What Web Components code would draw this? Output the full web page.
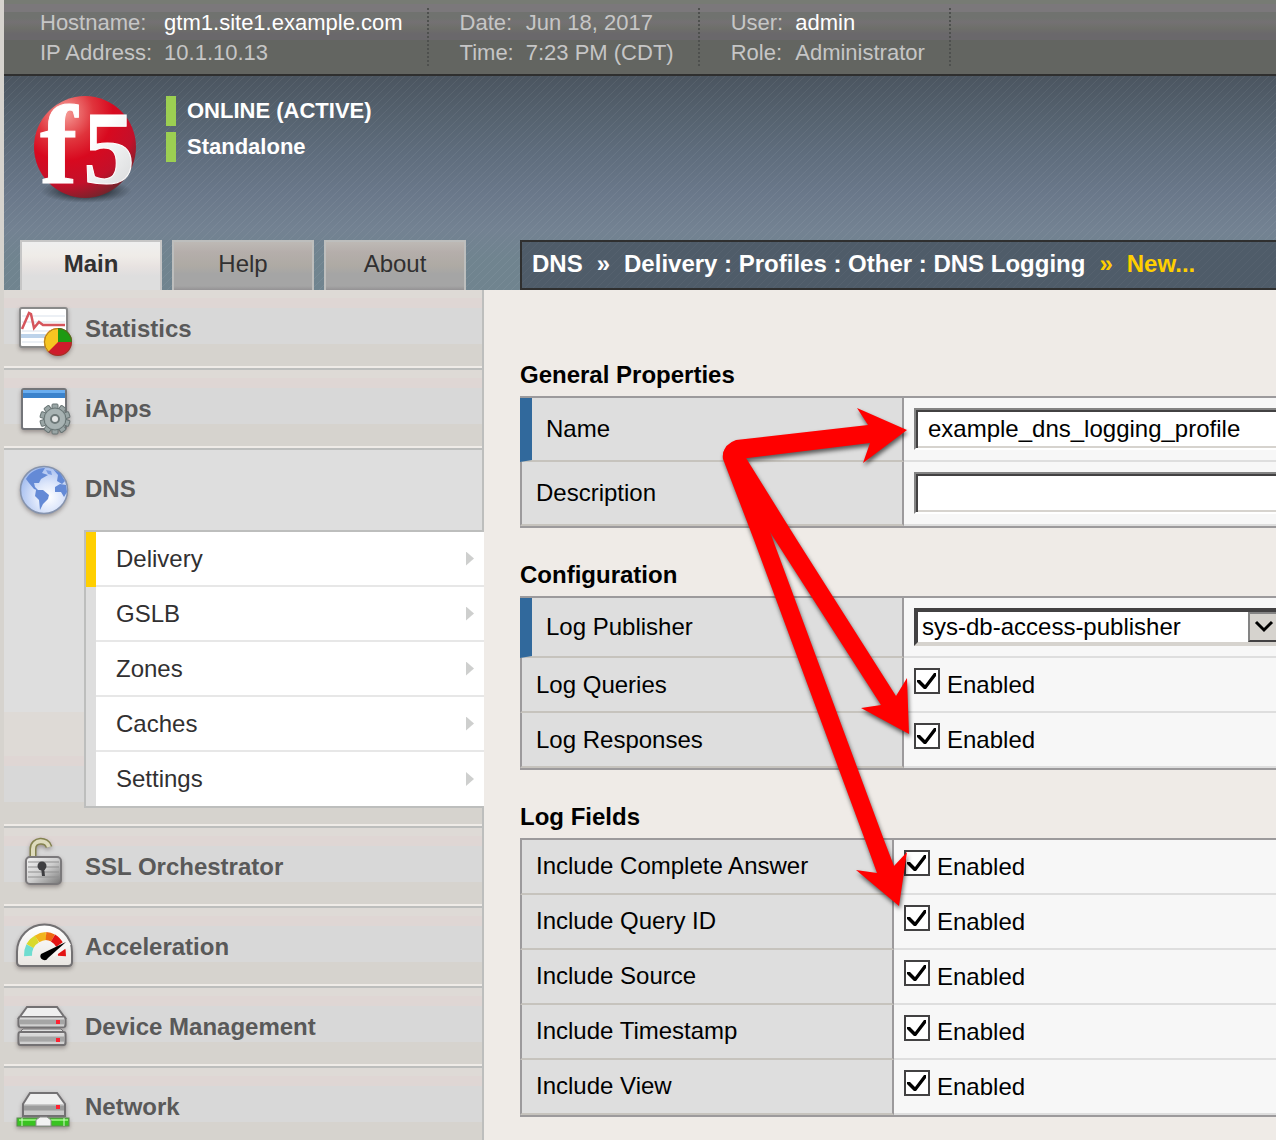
<!DOCTYPE html>
<html lang="en">
<head>
<meta charset="utf-8">
<title>DNS Logging Profile</title>
<style>
  body { margin: 0; font: 24px/28px "Liberation Sans", Arial, sans-serif; color: #000; background: #efebe7; }
</style>
</head>
<body>
<app-shell>
  <info-group slot="info" k1="Hostname:" v1="gtm1.site1.example.com" k2="IP Address:" v2="10.1.10.13" strong></info-group>
  <info-group slot="info" k1="Date:" v1="Jun 18, 2017" k2="Time:" v2="7:23 PM (CDT)"></info-group>
  <info-group slot="info" k1="User:" v1="admin" k2="Role:" v2="Administrator" strong></info-group>

  <brand-status slot="brand"></brand-status>

  <nav-tab slot="tabs" selected>Main</nav-tab>
  <nav-tab slot="tabs">Help</nav-tab>
  <nav-tab slot="tabs">About</nav-tab>

  <bread-crumb slot="crumb"></bread-crumb>

  <nav-item slot="nav" icon="stats" label="Statistics" first></nav-item>
  <nav-item slot="nav" icon="iapps" label="iApps"></nav-item>
  <nav-item slot="nav" icon="globe" label="DNS" open>
    <sub-item selected>Delivery</sub-item>
    <sub-item>GSLB</sub-item>
    <sub-item>Zones</sub-item>
    <sub-item>Caches</sub-item>
    <sub-item>Settings</sub-item>
  </nav-item>
  <nav-item slot="nav" icon="lock" label="SSL Orchestrator"></nav-item>
  <nav-item slot="nav" icon="gauge" label="Acceleration"></nav-item>
  <nav-item slot="nav" icon="device" label="Device Management"></nav-item>
  <nav-item slot="nav" icon="network" label="Network"></nav-item>

  <property-section heading="General Properties">
    <property-row label="Name" type="text" value="example_dns_logging_profile" required></property-row>
    <property-row label="Description" type="text" value=""></property-row>
  </property-section>
  <property-section heading="Configuration">
    <property-row label="Log Publisher" type="select" value="sys-db-access-publisher" required></property-row>
    <property-row label="Log Queries" type="check"></property-row>
    <property-row label="Log Responses" type="check"></property-row>
  </property-section>
  <property-section heading="Log Fields" narrow>
    <property-row label="Include Complete Answer" type="check"></property-row>
    <property-row label="Include Query ID" type="check"></property-row>
    <property-row label="Include Source" type="check"></property-row>
    <property-row label="Include Timestamp" type="check"></property-row>
    <property-row label="Include View" type="check"></property-row>
  </property-section>

  <callout-arrows slot="overlay"></callout-arrows>
</app-shell>

<script>
const define = (name, render) => customElements.define(name, class extends HTMLElement {
  connectedCallback() {
    if (this.shadowRoot) return;
    this.attachShadow({ mode: 'open' }).innerHTML = render(this);
  }
});
const at = (el, n) => el.getAttribute(n) || '';

define('app-shell', () => `
<style>
  :host { display: flex; flex-direction: column; position: relative; box-sizing: border-box; height: 100vh; overflow: hidden; border-left: 4px solid #d6d3ce; }
  .info { display: flex; padding: 8px 0 8px 5px; border-bottom: 2px solid #2f2f2f; flex: none;
    background: linear-gradient(#777b74 0 4px, #7b787b 4px 12px, #70726f 12px 18px, #747173 22px, #6e6f6a 28px, #6a686b 34px 40px, #636561 40px); }
  .head { flex: none; background:
      linear-gradient(135deg, rgba(255,255,255,.06) 0 12%, transparent 12% 50%, rgba(255,255,255,.06) 50% 62%, transparent 62%) 0 0 / 8px 8px,
      linear-gradient(#4b5560, #566370 20%, #5f6d7d 36%, #6a788a 55%, #738292 72%, #70848f 86%, #70848f); }
  .brand { height: 164px; }
  .bar { display: grid; grid-template-columns: 480px minmax(0, 1fr); height: 50px; }
  .tabs { display: flex; gap: 10px; padding-left: 16px; }
  .crumb { padding-left: 36px; }
  .main { flex: 1; min-height: 0; display: grid; grid-template-columns: 480px minmax(0, 1fr); }
  nav { background: linear-gradient(to left, #bdbebd 2px, #d6d3ce 2px); }
  main { padding: 71px 0 0 36px; background: #efebe7; overflow: hidden; display: flex; flex-direction: column; gap: 33px; }
</style>
<div class="info"><slot name="info"></slot></div>
<header class="head">
  <div class="brand"><slot name="brand"></slot></div>
  <div class="bar"><div class="tabs"><slot name="tabs"></slot></div><div class="crumb"><slot name="crumb"></slot></div></div>
</header>
<div class="main"><nav><slot name="nav"></slot></nav><main><slot></slot></main></div>
<slot name="overlay"></slot>`);

define('info-group', el => `
<style>
  :host { display: block; padding: 0 26px 0 31px; font-size: 22px; line-height: 30px; color: #c6c6c6;
    background: repeating-linear-gradient(#4e504e 0 2px, transparent 2px 4px) right top / 2px 100% no-repeat; white-space: nowrap; height: 58px; }
  dl { display: grid; grid-template-columns: auto auto; column-gap: 12px; margin: 0; }
  dd { margin: 0; }
  .s { color: #fff; }
</style>
<dl><dt>${at(el, 'k1')}</dt><dd class="${el.hasAttribute('strong') ? 's' : ''}">${at(el, 'v1')}</dd>
<dt>${at(el, 'k2')}</dt><dd>${at(el, 'v2')}</dd></dl>`);

define('brand-status', () => `
<style>
  :host { display: flex; gap: 20px; padding: 2px 0 0 22px; font-weight: bold; font-size: 22px; line-height: 30px; color: #fff; }
  svg { display: block; flex: none; }
  .st { display: flex; flex-direction: column; gap: 6px; padding-top: 18px; }
  .st div { border-left: 10px solid #9ccf52; padding-left: 11px; }
</style>
<svg width="120" height="140" viewBox="26 78 120 140" role="img" aria-label="f5">
  <defs>
    <radialGradient id="b" cx=".3" cy=".16" r=".95"><stop offset="0" stop-color="#f7a09a"/><stop offset=".3" stop-color="#e0343c"/><stop offset=".5" stop-color="#d8091f"/><stop offset=".75" stop-color="#c3102a"/><stop offset="1" stop-color="#5a2a2c"/></radialGradient>
    <radialGradient id="s"><stop offset="0" stop-color="#1c2228"/><stop offset=".5" stop-color="#2a323a" stop-opacity=".8"/><stop offset="1" stop-color="#3a444e" stop-opacity="0"/></radialGradient>
    <linearGradient id="w" x1="0" y1="0" x2="1" y2="1"><stop offset=".5" stop-color="#fff"/><stop offset="1" stop-color="#cfd1d3"/></linearGradient>
  </defs>
  <ellipse cx="86" cy="191" rx="46" ry="12" fill="url(#s)"/>
  <circle cx="85" cy="147" r="51" fill="url(#b)"/>
  <text y="183" font-family="Liberation Serif, serif" font-weight="bold" fill="url(#w)" stroke="#fff" stroke-width="1"><tspan x="40" font-size="112">f</tspan><tspan x="83" font-size="104">5</tspan></text>
</svg>
<div class="st"><div>ONLINE (ACTIVE)</div><div>Standalone</div></div>`);

define('nav-tab', el => `
<style>
  :host { display: block; width: 142px; }
  button { width: 100%; height: 50px; padding: 0 0 4px; font: inherit; color: #313031; border: 2px solid #bdbebd; border-bottom: 0; border-radius: 0;
    background: linear-gradient(#bdb9b5, #b5aeab 10px, #aeaaa4 24px, #a5a5a5 32px 44px, #949294); }
  :host([selected]) button { font-weight: bold; border-color: #c6c6c6; background: linear-gradient(#efefef, #efece8 14px, #e8e3e1 24px, #dedede 34px); }
</style>
<button type="button"><slot></slot></button>`);

define('bread-crumb', () => `
<style>
  :host { display: flex; box-sizing: border-box; height: 50px; align-items: center; gap: 14px; padding: 0 0 2px 10px; white-space: nowrap; overflow: hidden;
    border: 2px solid #2f2f2f; border-right: 0; color: #fff; font-weight: bold;
    background: linear-gradient(135deg, rgba(255,255,255,.03) 0 12%, transparent 12% 50%, rgba(255,255,255,.03) 50% 62%, transparent 62%) 0 0 / 8px 8px, #4f5c69; }
  .n { color: #ffcf00; }
</style>
<span>DNS</span><span>»</span><span>Delivery : Profiles : Other : DNS Logging</span><span class="n">»</span><span class="n">New...</span>`);

const box = (y, h) => `<rect x="6.5" y="${y}" width="47" height="${h}" rx="2" fill="url(#m)" stroke="#737173" stroke-width="2"/>`;
const teeth = Array.from({ length: 10 }, (_, i) => `<rect x="40" y="34" width="6" height="8" rx="1" transform="rotate(${i * 36} 43 49)"/>`).join('');
const icons = {
  stats: `<rect x="8" y="18" width="47" height="39" rx="2" fill="#fff" stroke="#8a8a8a" stroke-width="2"/>
    <path d="M10 26h43M10 32h43M10 41h43M10 52h43" stroke="#e6ebf2" stroke-width="1.500"/><path d="M9 46h45" stroke="#bdd3ea" stroke-width="4"/>
    <path d="M10 39L17 23L19 24L22 38L27 32L31 35H53" fill="none" stroke="#d6555c" stroke-width="2.500"/>
    <circle cx="46" cy="52" r="14" fill="#ce1c2c"/><path d="M46 52V38A14 14 0 0 1 60 52Z" fill="#1e9a12"/><path d="M46 52V38A14 14 0 0 0 36 62Z" fill="#f7c521"/>
    <circle cx="46" cy="52" r="13.500" fill="none" stroke="#7a4a20" stroke-opacity=".6"/>`,
  iapps: `<rect x="10" y="19" width="44" height="40" rx="2" fill="#fff" stroke="#737579" stroke-width="2"/><path d="M11 20H53V28H11Z" fill="#3b83cc"/><path d="M11 20H53V23H11Z" fill="#6aaef0"/>
    <g fill="#99a5a5" stroke="#687474" stroke-width="1">${teeth}<circle cx="43" cy="49" r="11"/></g><circle cx="43" cy="49" r="10" fill="#a8b3b3"/><circle cx="43" cy="49" r="4" fill="#e4e6e6" stroke="#6d7878" stroke-width="2"/>`,
  globe: `<circle cx="32" cy="40" r="23.500" fill="url(#g)" stroke="#8593ad" stroke-width="1.500"/>
    <path d="M14 29C18 22 25 18 33 18L30 23L36 25L29 29L27 33L22 33L23 37L27 41L22 39L17 33ZM41 19L48 23L53 31L50 34L45 31L46 25ZM24 40L31 40L37 45L36 49L31 54L28 60L27 50L23 46ZM43 37L48 34L54 35L55 42L52 47L49 42L43 42Z" fill="#648ad6"/>
    <path d="M34 20l5 1 1 4-4-1z" fill="#7b9ce0"/>`,
  lock: `<path d="M21 30V21C21 11 35 11 37 19" fill="none" stroke="#84824f" stroke-width="7"/><path d="M21 30V21C21 11 35 11 37 19" fill="none" stroke="#dedbbd" stroke-width="4"/>
    <rect x="14" y="29" width="35" height="27" rx="4" fill="url(#k)" stroke="#7b797b" stroke-width="2"/><path d="M16 34H47M16 39H47M16 44H47M16 49H47" stroke="#8f8f8f" stroke-opacity=".5" stroke-width="2"/>
    <circle cx="30" cy="38" r="4.500" fill="#3f3f42"/><path d="M29 39h3l1 9h-3z" fill="#3f3f42"/>`,
  gauge: `<path d="M5 54V44A27 27 0 0 1 60 44V54Q60 58 56 58H9Q5 58 5 54Z" fill="url(#d)" stroke="#737173" stroke-width="2"/>
    <g fill="none" stroke-width="8"><path d="M16 48A17 19 0 0 1 18 38" stroke="#6fddd0"/><path d="M18 38A17 19 0 0 1 25 31" stroke="#d9d92c"/><path d="M25 31A18 19 0 0 1 34 28" stroke="#f2b51d"/><path d="M34 28A18 19 0 0 1 41 30" stroke="#ee6a12"/><path d="M41 30A17 19 0 0 1 50 48" stroke="#e31414"/></g>
    <path d="M40 46L57 34" stroke="#f7f5f3" stroke-width="7"/><path d="M29 46L54 34L36 50A4 4 0 0 1 29 46Z" fill="#000"/>`,
  device: `<path d="M15 19H45L53 30H7Z" fill="#efefef" stroke="#737173" stroke-width="2"/>${box(29, 10)}<path d="M11 41H49L53 45H7Z" fill="#dedede" stroke="#737173"/>${box(44, 13)}
    <path d="M8 31H52M8 47H52" stroke="#d8d8d8" stroke-width="3"/><path d="M8 34H52M8 51H52" stroke="#a5a5a5" stroke-width="5"/><path d="M8 37.500H52M8 55H52" stroke="#d0d0d0" stroke-width="2"/><path d="M44 32h4v4h-4zM44 50h4v4h-4z" fill="#ff2131"/>`,
  network: `<path d="M18 25H45L53 36V48H11V36Z" fill="#efefef" stroke="#737173" stroke-width="2"/><path d="M12 36H52V47H12Z" fill="#c9c9c9"/><path d="M12 40H52" stroke="#9c9c9c" stroke-width="5"/><path d="M44 37h4v4h-4z" fill="#ff2131"/>
    <rect x="5" y="50" width="52" height="8" fill="#39c321" stroke="#5f8a55"/><path d="M7 52H56" stroke="#84ec6a" stroke-width="2"/><path d="M10 50v8M52 50v8" stroke="#d7f5cf" stroke-width="1"/><path d="M24 58V52L28 49H35L39 52V58Z" fill="#f2f2f2" stroke="#8c8c8c"/>`
};
define('nav-item', el => `
<style>
  :host { display: block; border-top: 2px solid #bdbebd; border-bottom: 2px solid #efebe7; margin-right: 2px;
    background: linear-gradient(#dedad6 0 8px, #dfd6d4 8px 18px, #d8d8d8 18px 54px, #d6d3ce 54px); }
  :host([first]) { border-top: 0; }
  :host([open]) { background: linear-gradient(to top, #d6d3ce 0 22px, #d8d8d8 22px 58px, #dfd6d4 58px 68px, #dedad6 68px 112px, #dedede 112px); }
  a { display: flex; align-items: center; height: 76px; gap: 7px; padding-left: 8px; font-weight: bold; color: #595959; text-decoration: none; }
  a span { padding-top: 2px; }
  svg { display: block; flex: none; filter: drop-shadow(0 2px 2px rgba(70,60,60,.45)); }
  .sub { display: none; }
  :host([open]) a { margin-bottom: 4px; }
  :host([open]) .sub { display: block; margin: 0 -2px 16px 80px; border: 2px solid #bdbebd; border-right: 0; position: relative; }
</style>
<a href="#"><svg width="66" height="76" viewBox="0 0 66 76" aria-hidden="true">
<defs><linearGradient id="m" x2="0" y2="1"><stop stop-color="#e8e8e8"/><stop offset="1" stop-color="#b8b8b8"/></linearGradient>
<linearGradient id="k" x2="1" y2="1"><stop stop-color="#f4f4f4"/><stop offset=".5" stop-color="#cfcfcf"/><stop offset="1" stop-color="#777"/></linearGradient>
<linearGradient id="d" x2="0" y2="1"><stop stop-color="#fff"/><stop offset="1" stop-color="#e9e6e2"/></linearGradient>
<radialGradient id="g" cx=".6" cy=".65" r=".7"><stop stop-color="#fff"/><stop offset=".4" stop-color="#dfe8fb"/><stop offset="1" stop-color="#9db8ee"/></radialGradient></defs>
${icons[at(el, 'icon')]}</svg><span>${at(el, 'label')}</span></a>
<div class="sub"><slot></slot></div>`);

define('sub-item', () => `
<style>
  :host { display: block; box-sizing: border-box; height: 55px; border-left: 10px solid #dedede; background: #fff; }
  :host([selected]) { border-left-color: #ffcf00; }
  :host(:last-child) { height: 54px; }
  a { display: flex; box-sizing: border-box; height: 100%; align-items: center; justify-content: space-between; padding: 0 10px 0 20px; border-bottom: 2px solid #e7e7e7; color: #313031; text-decoration: none; }
  :host(:last-child) a { border-bottom: 0; }
  i { width: 8px; height: 14px; background: #cecfce; clip-path: polygon(0 0, 100% 50%, 0 100%); }
</style>
<a href="#"><slot></slot><i></i></a>`);

define('property-section', el => `
<style>
  :host { display: block; --label: 384px; }
  :host([narrow]) { --label: 374px; --lift: 2px; }
  h2 { margin: 0 0 7px; font: inherit; font-weight: bold; }
  .rows { border: solid #9c9a9c; border-width: 2px 0; }
</style>
<h2>${at(el, 'heading')}</h2><div class="rows"><slot></slot></div>`);

const controls = {
  text: v => `<input id="c" class="t" type="text" value="${v}">`,
  select: v => `<span class="sel"><select id="c"><option>${v}</option></select><span class="arr"><svg width="20" height="14" viewBox="0 0 20 14"><path d="M2 2L10 10L18 2" fill="none" stroke="#000" stroke-width="3"/></svg></span></span>`,
  check: () => `<input id="c" type="checkbox" checked><label class="en" for="c">Enabled</label>`
};
define('property-row', el => `
<style>
  :host { display: grid; grid-template-columns: var(--label) minmax(0, 1fr); min-height: 55px; }
  .l { display: flex; align-items: center; box-sizing: border-box; padding: 0 0 var(--lift, 0) 14px; background: #dedede; border: solid #9c9a9c; border-width: 0 2px; border-bottom: 2px solid #c6c3bd; }
  :host([required]) .l { border-left: 12px solid #31699c; }
  .v { display: flex; align-items: flex-start; gap: 7px; padding: 10px 0 10px 10px; background: #f7f7f7; border-bottom: 2px solid #dedede; overflow: hidden; box-sizing: border-box; }
  .v.check { padding-bottom: 0; }
  .t { flex: none; box-sizing: border-box; width: 400px; height: 42px; padding: 0 12px; font: inherit; color: #000; background: #fff; border-radius: 0; outline: 0;
    border: 2px solid; border-color: #848484 #fff #fff #848484; box-shadow: inset 2px 2px #424142, inset -2px -2px #d6d3ce; }
  .sel { display: grid; flex: none; width: 370px; height: 38px; box-sizing: border-box; border: 4px solid; border-color: #424142 #d6d3ce #d6d3ce #424142; background: #fff; }
  select { grid-area: 1 / 1; appearance: none; border: 0; border-radius: 0; padding: 0 4px; font: inherit; color: #000; background: transparent; outline: 0; }
  .arr { grid-area: 1 / 1; justify-self: end; width: 32px; box-sizing: border-box; display: grid; place-items: center; background: #d6d3ce; border: 2px solid; border-color: #848484 #424142 #424142 #848484; pointer-events: none; }
  [type=checkbox] { appearance: none; flex: none; box-sizing: border-box; width: 26px; height: 26px; margin: 0; border: 2px solid #424142; background: #fff; }
  [type=checkbox]:checked::before { content: ""; display: block; width: 22px; height: 22px; background: #000;
    clip-path: polygon(1px 10px, 4px 10px, 9px 15px, 18px 3px, 20px 3px, 20px 6px, 10px 19px, 8px 19px, 1px 12px); }
  .en { line-height: 34px; }
</style>
<label class="l" for="c">${at(el, 'label')}</label><div class="v ${at(el, 'type')}">${controls[at(el, 'type')](at(el, 'value'))}</div>`);

define('callout-arrows', () => `
<style>
  :host { position: absolute; top: 0; left: -4px; pointer-events: none; }
  svg { display: block; filter: drop-shadow(1px 3px 2px rgba(0,0,0,.6)); }
</style>
<svg width="940" height="930" viewBox="0 0 940 930" fill="#f00" aria-hidden="true">
  <path d="M736 440L868 425L857 408L907 430L863 463L870 443L740 459L723 455Q724 444 736 440Z"/>
  <path d="M736 441Q742 450 746 458L797 540L896 696L907 678L909 734L861 708L881 705L775 540L728 466Z"/>
  <path d="M723 459Q721 447 736 441L746 464L773 540L884 840L894 866L907 852L899 906L856 870L877 873L865 840L754 540Z"/>
</svg>`);
</script>
</body>
</html>
